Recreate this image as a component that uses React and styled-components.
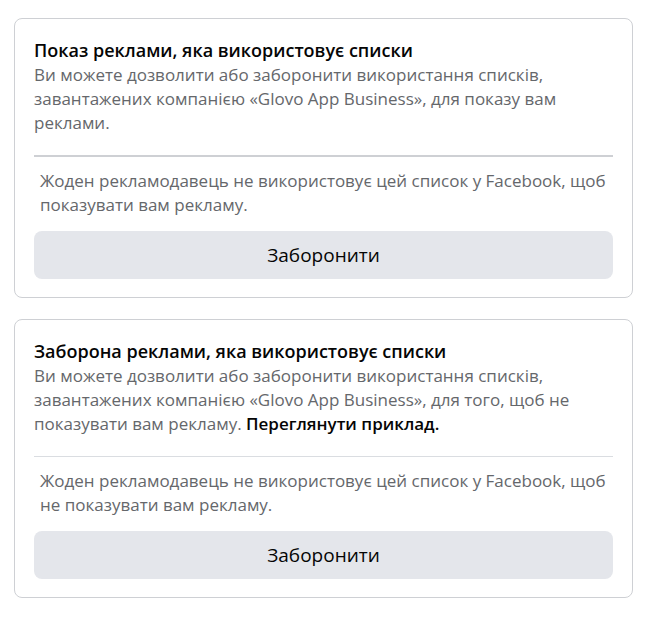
import React from 'react'
import styled, { createGlobalStyle } from 'styled-components'

const GlobalStyle = createGlobalStyle`
  body {
    margin: 0;
    background: #ffffff;
    font-family: "Open Sans", "Noto Sans", sans-serif;
  }
`

const Page = styled.div`
  display: flex;
  flex-direction: column;
  gap: 21px;
  padding: 18px 15px 0 14px;
`

const Card = styled.section`
  border: 1px solid #ced0d4;
  border-radius: 8px;
  padding: 19px 19px 18px 19px;
  background: #fff;
`

const Title = styled.h2`
  margin: 0;
  font-size: 18px;
  font-weight: 600;
  line-height: 24px;
  color: #050505;
`

const Description = styled.p`
  margin: 0 0 0;
  padding-top: 1px;
  font-size: 17px;
  line-height: 24px;
  color: #65676b;
`

const Link = styled.span`
  color: #050505;
  font-weight: 600;
`

const Divider = styled.hr`
  margin: 20px 0 12px;
  border: none;
  border-top: ${p => (p.thick ? '2px solid #ced0d4' : '1px solid #dadde1')};
`

const Notice = styled.p`
  margin: 0 0 14px;
  padding: 0 6px;
  font-size: 17px;
  line-height: 24px;
  color: #65676b;
`

const Button = styled.button`
  display: block;
  width: 100%;
  height: 48px;
  border: none;
  border-radius: 8px;
  background: #e4e6eb;
  color: #050505;
  font-family: inherit;
  font-size: 19px;
  font-weight: 500;
  cursor: pointer;
`

const App = () => {
  return (
    <>
      <GlobalStyle />
      <Page>
        <Card>
          <Title>Показ реклами, яка використовує списки</Title>
          <Description>
            Ви можете дозволити або заборонити використання списків,
            завантажених компанією «Glovo App Business», для показу вам реклами.
          </Description>
          <Divider thick />
          <Notice>
            Жоден рекламодавець не використовує цей список у Facebook, щоб
            показувати вам рекламу.
          </Notice>
          <Button>Заборонити</Button>
        </Card>
        <Card>
          <Title>Заборона реклами, яка використовує списки</Title>
          <Description>
            Ви можете дозволити або заборонити використання списків,
            завантажених компанією «Glovo App Business», для того, щоб не
            показувати вам рекламу. <Link>Переглянути приклад.</Link>
          </Description>
          <Divider />
          <Notice>
            Жоден рекламодавець не використовує цей список у Facebook, щоб не
            показувати вам рекламу.
          </Notice>
          <Button>Заборонити</Button>
        </Card>
      </Page>
    </>
  )
}

export default App
